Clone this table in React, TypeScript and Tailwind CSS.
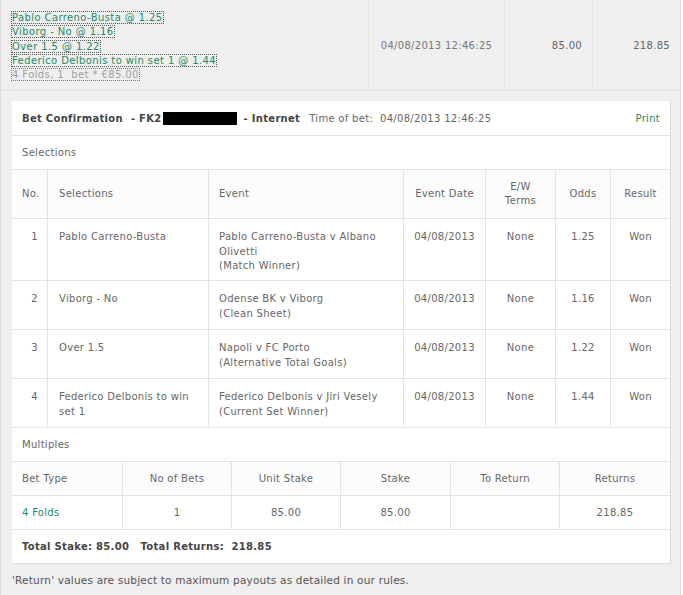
import React from "react";

const selections = [
  {
    no: "1",
    name: ["Pablo Carreno-Busta"],
    event: ["Pablo Carreno-Busta v Albano", "Olivetti", "(Match Winner)"],
    odds: "1.25",
    h: "h-[62px]",
  },
  {
    no: "2",
    name: ["Viborg - No"],
    event: ["Odense BK v Viborg", "(Clean Sheet)"],
    odds: "1.16",
    h: "h-[49px]",
  },
  {
    no: "3",
    name: ["Over 1.5"],
    event: ["Napoli v FC Porto", "(Alternative Total Goals)"],
    odds: "1.22",
    h: "h-[49px]",
  },
  {
    no: "4",
    name: ["Federico Delbonis to win", "set 1"],
    event: ["Federico Delbonis v Jiri Vesely", "(Current Set Winner)"],
    odds: "1.44",
    h: "h-[49px]",
  },
];

const links = [
  "Pablo Carreno-Busta @ 1.25",
  "Viborg - No @ 1.16",
  "Over 1.5 @ 1.22",
  "Federico Delbonis to win set 1 @ 1.44",
];

const selCols = "grid grid-cols-[36px_161px_195px_82px_70px_55px_59px]";
const multiCols = "grid grid-cols-[111px_109px_109px_110px_109px_110px]";

export default function App() {
  return (
    <div className="w-[681px] h-[595px] bg-[#efefef] border-x border-[#dcdcdc] font-['DejaVu_Sans',Verdana,sans-serif] text-[10px] tracking-[0.3px] text-[#666]">
      {/* top summary row */}
      <div className="flex h-[91px] border-b border-[#e2e2e2]">
        <div className="w-[368px] border-r border-[#e4e4e4] pl-[11px] pt-[11px] leading-[14.3px] tracking-[0.4px]">
          {links.map((l) => (
            <div key={l}>
              <span className="text-[#1f8a5f] outline outline-dotted outline-[#555]">{l}</span>
            </div>
          ))}
          <div>
            <span className="text-[#a0a0a0] outline outline-dotted outline-[#777]">
              4 Folds, 1&nbsp; bet * €85.00
            </span>
          </div>
        </div>
        <div className="w-[136px] border-r border-[#e4e4e4] flex items-center justify-center text-[#777]">
          04/08/2013 12:46:25
        </div>
        <div className="w-[88px] border-r border-[#e4e4e4] flex items-center justify-end pr-[10px]">
          85.00
        </div>
        <div className="flex-1 flex items-center justify-end pr-[10px]">218.85</div>
      </div>

      <div className="pl-[11px] pr-[10px] pt-[10px]">
        <div className="w-[658px] bg-white shadow-[1px_1px_0_#dcdcdc]">
          {/* header */}
          <div className="h-[35px] border-b border-[#e3e3e3] flex items-center pt-px px-[10px] text-[#666]">
            <span className="font-bold text-[#444]">Bet Confirmation</span>
            <span className="ml-[8px] font-bold text-[#444]">- FK2</span>
            <span className="inline-block w-[74px] h-[13px] bg-black ml-px" />
            <span className="ml-[7px] font-bold text-[#444]">- Internet</span>
            <span className="ml-[9px]">Time of bet:&nbsp; 04/08/2013 12:46:25</span>
            <span className="ml-auto text-[#1f8a5f]">Print</span>
          </div>

          <div className="h-[34px] border-b border-[#e3e3e3] flex items-center px-[10px]">
            Selections
          </div>

          {/* selections table */}
          <div className={`${selCols} h-[49px] border-b border-[#e3e3e3] bg-[#fcfcfc] leading-[14.5px]`}>
            <div className="border-r border-[#e3e3e3] flex items-center pl-[10px]">No.</div>
            <div className="border-r border-[#e3e3e3] flex items-center pl-[11px]">Selections</div>
            <div className="border-r border-[#e3e3e3] flex items-center pl-[10px]">Event</div>
            <div className="border-r border-[#e3e3e3] flex items-center justify-center">Event Date</div>
            <div className="border-r border-[#e3e3e3] flex items-center justify-center text-center">
              E/W
              <br />
              Terms
            </div>
            <div className="border-r border-[#e3e3e3] flex items-center justify-center">Odds</div>
            <div className="flex items-center justify-center">Result</div>
          </div>

          {selections.map((s) => (
            <div key={s.no} className={`${selCols} ${s.h} border-b border-[#e3e3e3] leading-[14.5px]`}>
              <div className="border-r border-[#e3e3e3] pt-[11px] text-right pr-[9px]">{s.no}</div>
              <div className="border-r border-[#e3e3e3] pt-[11px] pl-[11px]">
                {s.name.map((n) => (
                  <div key={n}>{n}</div>
                ))}
              </div>
              <div className="border-r border-[#e3e3e3] pt-[11px] pl-[10px]">
                {s.event.map((e) => (
                  <div key={e}>{e}</div>
                ))}
              </div>
              <div className="border-r border-[#e3e3e3] pt-[11px] text-center">04/08/2013</div>
              <div className="border-r border-[#e3e3e3] pt-[11px] text-center">None</div>
              <div className="border-r border-[#e3e3e3] pt-[11px] text-center">{s.odds}</div>
              <div className="pt-[11px] text-center">Won</div>
            </div>
          ))}

          <div className="h-[34px] border-b border-[#e3e3e3] flex items-center px-[10px]">
            Multiples
          </div>

          {/* multiples */}
          <div className={`${multiCols} h-[34px] border-b border-[#e3e3e3] bg-[#fcfcfc]`}>
            <div className="border-r border-[#e3e3e3] flex items-center pl-[10px]">Bet Type</div>
            <div className="border-r border-[#e3e3e3] flex items-center justify-center">No of Bets</div>
            <div className="border-r border-[#e3e3e3] flex items-center justify-center">Unit Stake</div>
            <div className="border-r border-[#e3e3e3] flex items-center justify-center">Stake</div>
            <div className="border-r border-[#e3e3e3] flex items-center justify-center">To Return</div>
            <div className="flex items-center justify-center">Returns</div>
          </div>
          <div className={`${multiCols} h-[34px] border-b border-[#e3e3e3]`}>
            <div className="border-r border-[#e3e3e3] flex items-center pl-[10px] text-[#1f8a5f]">4 Folds</div>
            <div className="border-r border-[#e3e3e3] flex items-center justify-center">1</div>
            <div className="border-r border-[#e3e3e3] flex items-center justify-center">85.00</div>
            <div className="border-r border-[#e3e3e3] flex items-center justify-center">85.00</div>
            <div className="border-r border-[#e3e3e3] flex items-center justify-center" />
            <div className="flex items-center justify-center">218.85</div>
          </div>

          <div className="h-[33px] flex items-center px-[10px] font-bold text-[#444]">
            Total Stake: 85.00&nbsp;&nbsp; Total Returns:&nbsp; 218.85
          </div>
        </div>

        <p className="mt-[10px] text-[10.5px] tracking-[0.2px] text-[#555]">
          'Return' values are subject to maximum payouts as detailed in our rules.
        </p>
      </div>
    </div>
  );
}
